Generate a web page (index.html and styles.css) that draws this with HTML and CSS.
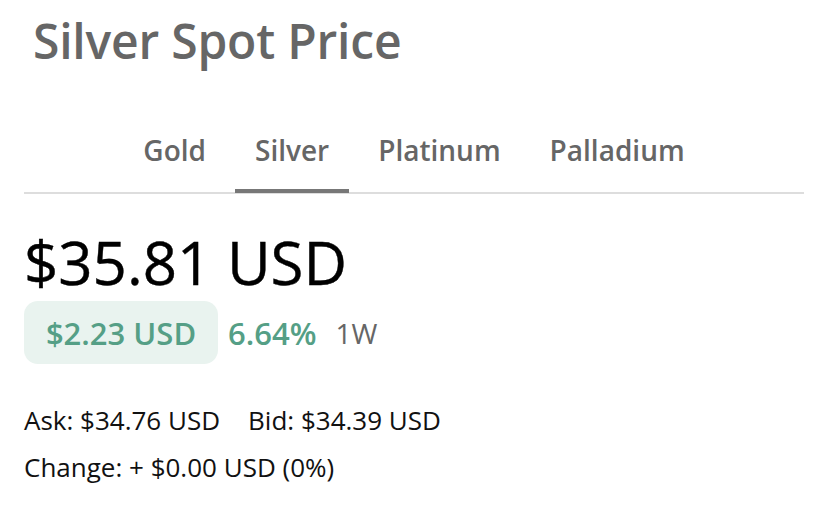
FILE: index.html
```html
<!DOCTYPE html>
<html>
<head>
<meta charset="utf-8">
<link rel="stylesheet" href="styles.css">
</head>
<body>
<div class="page">
  <h1 class="title">Silver Spot Price</h1>
  <nav class="tabs">
    <a class="tab">Gold</a>
    <a class="tab active">Silver</a>
    <a class="tab">Platinum</a>
    <a class="tab">Palladium</a>
  </nav>
  <div class="price">$35.81 USD</div>
  <div class="change-row">
    <span class="badge">$2.23 USD</span>
    <span class="pct">6.64%</span>
    <span class="period">1W</span>
  </div>
  <div class="details">
    <div class="line"><span class="ask">Ask: $34.76 USD</span><span>Bid: $34.39 USD</span></div>
    <div class="line">Change: + $0.00 USD (0%)</div>
  </div>
</div>
</body>
</html>
```

FILE: styles.css
```css
html, body {
  margin: 0;
  padding: 0;
  background: #fff;
}
.page {
  width: 780px;
  padding: 0 24px;
  font-family: "Open Sans", sans-serif;
}
.title {
  margin: 0;
  padding: 10px 0 0 9px;
  font-size: 48px;
  font-weight: 600;
  color: #666;
  line-height: 62px;
  letter-spacing: -0.2px;
}
.tabs {
  display: flex;
  justify-content: center;
  gap: 9px;
  margin-top: 60px;
  border-bottom: 2px solid #ddd;
}
.tab {
  padding: 0 20px;
  font-size: 28px;
  font-weight: 600;
  color: #666;
  line-height: 36px;
  padding-bottom: 21px;
  border-bottom: 4px solid transparent;
  margin-bottom: -1px;
}
.tab.active {
  border-bottom-color: #777;
}
.price {
  margin-top: 34px;
  font-size: 60px;
  font-weight: 500;
  color: #000;
  line-height: 68px;
  -webkit-text-stroke: 0.4px #000;
}
.change-row {
  display: flex;
  align-items: center;
  margin-top: 5px;
}
.badge {
  display: inline-flex;
  align-items: center;
  justify-content: center;
  width: 194px;
  height: 63px;
  background: #e9f3ef;
  border-radius: 14px;
  color: #559f86;
  font-size: 31px;
  font-weight: 600;
}
.pct {
  margin-left: 10px;
  color: #559f86;
  font-size: 31px;
  font-weight: 600;
}
.period {
  margin-left: 19px;
  color: #666;
  font-size: 28px;
}
.details {
  margin-top: 33px;
  font-size: 26px;
  color: #111;
}
.line {
  line-height: 47px;
}
.ask {
  margin-right: 28px;
}
```
